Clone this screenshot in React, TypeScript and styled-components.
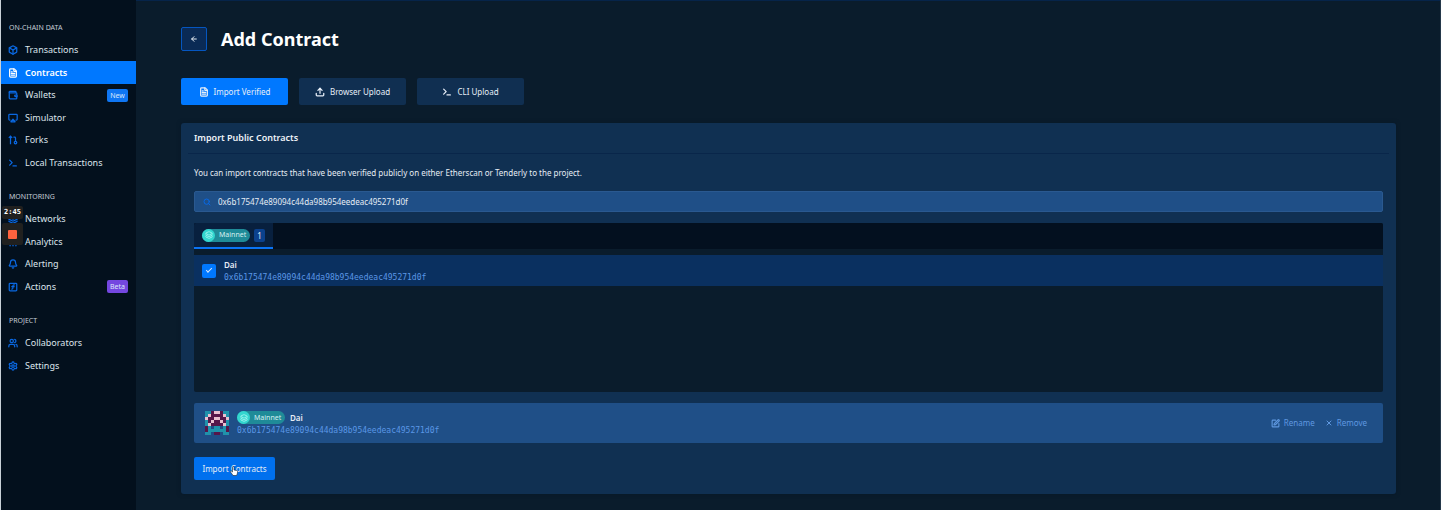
import React from 'react';
import styled, { createGlobalStyle, css } from 'styled-components';
import {
  Airplay,
  ArrowLeft,
  BarChart2,
  Bell,
  Box,
  FileText,
  Layers,
  Search,
  Settings,
  SquareFunction,
  SquarePen,
  Terminal,
  Upload,
  Users,
  Wallet,
  X,
} from 'lucide-react';

const ADDRESS = '0x6b175474e89094c44da98b954eedeac495271d0f';

const GlobalStyle = createGlobalStyle`
  *, *::before, *::after { box-sizing: border-box; }
  body {
    margin: 0;
    background: #0a1c2c;
    color: #e6edf5;
    font-family: "Noto Sans", "Open Sans", sans-serif;
    font-size: 8px;
    line-height: 12px;
  }
  button, input { font: inherit; color: inherit; }
  h1, h2, h3, p, ul { margin: 0; padding: 0; }
  ul { list-style: none; }
`;

const Page = styled.div`
  display: flex;
  min-height: 100vh;
  border-left: 1px solid #c9d1d8;
  border-right: 1px solid #24384a;
`;

const Sidebar = styled.nav`
  flex: none;
  width: 135px;
  padding-top: 22px;
  background: #03101d;
`;

const NavGroup = styled.section`
  margin-bottom: 17px;
`;

const NavHeading = styled.h2`
  padding-left: 8px;
  margin-bottom: 5px;
  font-size: 7px;
  line-height: 12px;
  font-weight: 400;
  color: #c3ccd6;
`;

const NavItem = styled.li`
  height: 22px;
  &:nth-child(even) { height: 23px; }
`;

const NavLink = styled.a<{ $active?: boolean }>`
  display: flex;
  align-items: center;
  gap: 7px;
  height: 100%;
  padding: 0 8px 0 7px;
  font-size: 9px;
  text-decoration: none;
  color: #dde4ec;
  svg { flex: none; width: 10px; height: 10px; color: #0a68e2; stroke-width: 3; }
  ${(p) =>
    p.$active &&
    css`
      background: #0078ff;
      color: #fff;
      font-weight: 600;
      svg { color: #fff; }
    `}
`;

const Tag = styled.span<{ $tone: 'blue' | 'purple' }>`
  width: 21px;
  margin-left: auto;
  border-radius: 2px;
  background: ${(p) => (p.$tone === 'blue' ? '#0f76f3' : '#7447e0')};
  color: #dbe6fb;
  font-size: 7px;
  line-height: 13px;
  text-align: center;
`;

const Main = styled.main`
  flex: 1;
  min-width: 0;
  padding: 25px 44px 17px 45px;
  border-top: 1px solid #06244a;
`;

const TitleRow = styled.header`
  display: flex;
  align-items: center;
  gap: 14px;
  height: 26px;
  margin-bottom: 26px;
`;

const BackButton = styled.button`
  display: grid;
  place-items: center;
  width: 26px;
  height: 24px;
  padding: 0;
  border: 1px solid #0556c0;
  border-radius: 2px;
  background: #0a2a55;
`;

const Title = styled.h1`
  font-size: 18px;
  line-height: 26px;
  font-weight: 700;
  color: #fff;
`;

const Modes = styled.div`
  display: flex;
  gap: 11px;
  margin-bottom: 18px;
`;

const ModeButton = styled.button<{ $active?: boolean }>`
  display: flex;
  align-items: center;
  justify-content: center;
  gap: 5px;
  width: 107px;
  height: 27px;
  padding: 0;
  border: 0;
  border-radius: 2px;
  background: ${(p) => (p.$active ? '#0078ff' : '#102f51')};
  color: #e6eef8;
`;

const Card = styled.section`
  padding: 0 13px 14px;
  border-radius: 3px;
  background: #103052;
  box-shadow: 0 0 4px #06152399;
`;

const CardHeader = styled.header`
  margin: 0 -6px 13px;
  padding: 9px 6px;
  border-bottom: 1px solid #09264a;
`;

const CardTitle = styled.h2`
  font-size: 9px;
  line-height: 12px;
  font-weight: 600;
  color: #eef3f8;
`;

const Intro = styled.p`
  margin-bottom: 12px;
`;

const SearchBox = styled.label`
  display: flex;
  align-items: center;
  gap: 7px;
  height: 21px;
  padding: 0 8px;
  margin-bottom: 11px;
  border: 1px solid #2a5990;
  border-radius: 2px;
  background: #1f4f87;
  svg { flex: none; color: #0868e4; }
`;

const SearchInput = styled.input`
  flex: 1;
  min-width: 0;
  padding: 0;
  border: 0;
  outline: 0;
  background: transparent;
  line-height: 12px;
`;

const Results = styled.div`
  height: 169px;
  margin-bottom: 11px;
  border-radius: 2px;
  overflow: hidden;
  background: #0a1c2c;
`;

const NetworkTabs = styled.div`
  display: flex;
  height: 26px;
  margin-bottom: 6px;
  background: #03101f;
`;

const NetworkTab = styled.button`
  display: flex;
  align-items: center;
  gap: 4px;
  width: 79px;
  padding: 0 8px;
  border: 0;
  border-bottom: 2px solid #0a74f5;
  background: #08203e;
`;

const NetworkPill = styled.span`
  display: flex;
  align-items: center;
  gap: 4px;
  width: 48px;
  height: 13px;
  border-radius: 7px;
  background: #1f8b98;
  color: #d5f0f0;
  font-size: 7px;
  line-height: 12px;
`;

const NetworkDot = styled.span`
  display: grid;
  place-items: center;
  width: 13px;
  height: 13px;
  border-radius: 50%;
  background: #33d6cf;
  color: #c6fffa;
`;

const Count = styled.span`
  width: 11px;
  border-radius: 2px;
  background: #0b418d;
  font-size: 8px;
  line-height: 13px;
  text-align: center;
`;

const ResultRow = styled.label`
  display: flex;
  align-items: center;
  gap: 8px;
  height: 31px;
  padding: 0 8px;
  background: #0a3060;
`;

const Tick = styled.input`
  appearance: none;
  flex: none;
  width: 14px;
  height: 14px;
  margin: 0;
  border-radius: 2px;
  background: #0078ff;
  display: grid;
  place-items: center;
  &:checked::before {
    content: "";
    width: 6px;
    height: 3px;
    margin-bottom: 2px;
    border: solid #d6e8ff;
    border-width: 0 0 1px 1px;
    transform: rotate(-45deg);
  }
`;

const Details = styled.span`
  display: block;
  padding-top: 2px;
`;

const Name = styled.strong`
  display: block;
  font-size: 8px;
  line-height: 12px;
  font-weight: 600;
`;

const Address = styled.code`
  display: block;
  margin-top: 1px;
  font-family: "DejaVu Sans Mono", monospace;
  font-size: 8px;
  line-height: 12px;
  color: #5b97e6;
`;

const Chosen = styled.div`
  display: flex;
  align-items: center;
  gap: 8px;
  height: 40px;
  padding: 0 16px 0 11px;
  margin-bottom: 14px;
  border-radius: 2px;
  background: #1f4f87;
`;

const NameRow = styled.span`
  display: flex;
  align-items: center;
  gap: 5px;
`;

const Actions = styled.div`
  display: flex;
  gap: 10px;
  margin-left: auto;
`;

const TextButton = styled.button`
  display: flex;
  align-items: center;
  gap: 4px;
  padding: 0;
  border: 0;
  background: none;
  color: #5f98e0;
`;

const Submit = styled.button`
  display: block;
  width: 81px;
  height: 23px;
  padding: 0;
  border: 0;
  border-radius: 2px;
  background: #0070ee;
`;

const Recorder = styled.aside`
  position: absolute;
  top: 206px;
  left: 2px;
  display: grid;
  gap: 4px;
  width: 21px;
`;

const RecorderTime = styled.span`
  border-radius: 2px;
  background: #20201f;
  color: #fff;
  font-family: "DejaVu Sans Mono", monospace;
  font-size: 7px;
  line-height: 13px;
  font-weight: 700;
  text-align: center;
`;

const RecorderStop = styled.button`
  display: grid;
  place-items: center;
  height: 22px;
  padding: 0;
  border: 0;
  border-radius: 2px;
  background: #20201f;
  &::before {
    content: "";
    width: 9px;
    height: 9px;
    border-radius: 1px;
    background: #ff623e;
  }
`;

const SubmitWrap = styled.div`
  position: relative;
  width: max-content;
`;

const Pointer = styled.svg`
  position: absolute;
  left: 36px;
  top: 9px;
  pointer-events: none;
`;

const FACE = ['ttmp', 'tpmm', 'pmmp', 'tmpm', 'tpmm', 'mtbt', 'mttt', 'ttbm'];
const FACE_COLORS: Record<string, string> = { t: '#2092ab', m: '#56164a', p: '#e9bfd0', b: '#1f4f87' };

function Identicon() {
  return (
    <svg width="24" height="24" viewBox="0 0 8 8" shapeRendering="crispEdges" aria-hidden="true">
      {FACE.map((half, y) =>
        [...half, ...[...half].reverse()].map((c, x) => (
          <rect key={`${x}-${y}`} x={x} y={y} width="1" height="1" fill={FACE_COLORS[c]} />
        )),
      )}
    </svg>
  );
}

function ForkIcon() {
  return (
    <svg viewBox="0 0 24 24" fill="none" stroke="currentColor" aria-hidden="true">
      <path d="M6 22V4M2 7l4-4 4 4M13 5h3a2 2 0 0 1 2 2v8" />
      <circle cx="18" cy="18" r="3" />
    </svg>
  );
}

function Mainnet() {
  return (
    <NetworkPill>
      <NetworkDot>
        <Layers size={8} />
      </NetworkDot>
      Mainnet
    </NetworkPill>
  );
}

type Entry = { label: string; icon: React.ElementType; active?: boolean; tag?: string; tone?: 'blue' | 'purple' };

const NAV: { heading: string; items: Entry[] }[] = [
  {
    heading: 'ON-CHAIN DATA',
    items: [
      { label: 'Transactions', icon: Box },
      { label: 'Contracts', icon: FileText, active: true },
      { label: 'Wallets', icon: Wallet, tag: 'New', tone: 'blue' },
      { label: 'Simulator', icon: Airplay },
      { label: 'Forks', icon: ForkIcon },
      { label: 'Local Transactions', icon: Terminal },
    ],
  },
  {
    heading: 'MONITORING',
    items: [
      { label: 'Networks', icon: Layers },
      { label: 'Analytics', icon: BarChart2 },
      { label: 'Alerting', icon: Bell },
      { label: 'Actions', icon: SquareFunction, tag: 'Beta', tone: 'purple' },
    ],
  },
  {
    heading: 'PROJECT',
    items: [
      { label: 'Collaborators', icon: Users },
      { label: 'Settings', icon: Settings },
    ],
  },
];

export default function App() {
  return (
    <>
      <GlobalStyle />
      <Page>
        <Sidebar>
          {NAV.map((group) => (
            <NavGroup key={group.heading}>
              <NavHeading>{group.heading}</NavHeading>
              <ul>
                {group.items.map(({ label, icon: Icon, active, tag, tone }) => (
                  <NavItem key={label}>
                    <NavLink href="#" $active={active}>
                      <Icon />
                      {label}
                      {tag && <Tag $tone={tone ?? 'blue'}>{tag}</Tag>}
                    </NavLink>
                  </NavItem>
                ))}
              </ul>
            </NavGroup>
          ))}
        </Sidebar>
        <Main>
          <TitleRow>
            <BackButton aria-label="Back">
              <ArrowLeft size={8} strokeWidth={3} />
            </BackButton>
            <Title>Add Contract</Title>
          </TitleRow>
          <Modes>
            <ModeButton $active>
              <FileText size={10} strokeWidth={3} />
              Import Verified
            </ModeButton>
            <ModeButton>
              <Upload size={10} strokeWidth={3} />
              Browser Upload
            </ModeButton>
            <ModeButton>
              <Terminal size={10} strokeWidth={3} />
              CLI Upload
            </ModeButton>
          </Modes>
          <Card>
            <CardHeader>
              <CardTitle>Import Public Contracts</CardTitle>
            </CardHeader>
            <Intro>
              You can import contracts that have been verified publicly on either Etherscan or Tenderly to the project.
            </Intro>
            <SearchBox>
              <Search size={8} strokeWidth={3} />
              <SearchInput aria-label="Contract address" defaultValue={ADDRESS} />
            </SearchBox>
            <Results>
              <NetworkTabs>
                <NetworkTab>
                  <Mainnet />
                  <Count>1</Count>
                </NetworkTab>
              </NetworkTabs>
              <ResultRow>
                <Tick type="checkbox" defaultChecked />
                <Details>
                  <Name>Dai</Name>
                  <Address>{ADDRESS}</Address>
                </Details>
              </ResultRow>
            </Results>
            <Chosen>
              <Identicon />
              <Details>
                <NameRow>
                  <Mainnet />
                  <Name>Dai</Name>
                </NameRow>
                <Address>{ADDRESS}</Address>
              </Details>
              <Actions>
                <TextButton>
                  <SquarePen size={9} strokeWidth={3} />
                  Rename
                </TextButton>
                <TextButton>
                  <X size={8} strokeWidth={3} />
                  Remove
                </TextButton>
              </Actions>
            </Chosen>
            <SubmitWrap>
              <Submit>Import Contracts</Submit>
              <Pointer width="8" height="10" viewBox="0 0 16 20" aria-hidden="true">
                <path
                  d="M5 2.5c0-2 3-2 3 0V8l5 1c2 .4 2.500 1.300 2.300 3l-.8 4-1.500 3H6l-2-3-3-4c-1-1.600 1-2.800 2.200-1.500L5 12z"
                  fill="#fff"
                  stroke="#1b2530"
                  strokeWidth="1.200"
                />
              </Pointer>
            </SubmitWrap>
          </Card>
        </Main>
      </Page>
      <Recorder aria-label="Recording">
        <RecorderTime>2:45</RecorderTime>
        <RecorderStop aria-label="Stop recording" />
      </Recorder>
    </>
  );
}
